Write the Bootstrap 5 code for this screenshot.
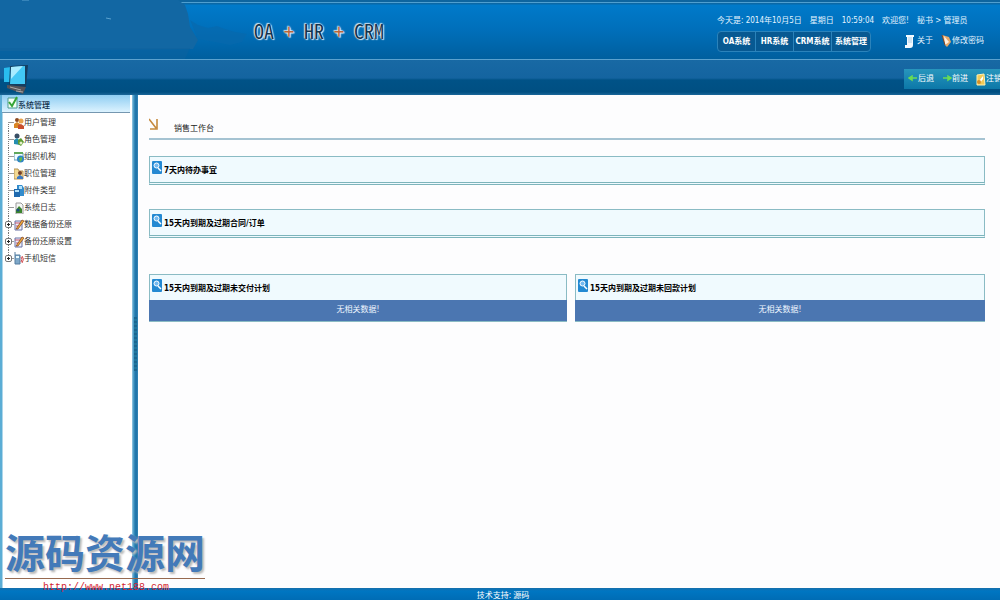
<!DOCTYPE html>
<html lang="zh-CN">
<head>
<meta charset="utf-8">
<meta name="viewport" content="width=device-width, initial-scale=1">
<title>OA + HR + CRM</title>
<link href="https://cdn.jsdelivr.net/npm/bootstrap@5.3.0/dist/css/bootstrap.min.css" rel="stylesheet">
<style>
body{font-family:"DejaVu Sans Condensed","Noto Sans CJK SC",sans-serif;font-size:8px;line-height:12px;color:#222;background:#fdfdfe}
a{color:inherit;text-decoration:none}
svg{flex:none;display:block}
.page-top{height:60px;background:linear-gradient(#0e659f 0 2px,#4f9fd0 2px 3px,#0a68a6 3px 4px,#007aca 5px,#006fba 30px,#005f9e);border-bottom:1px solid #5ba2cf}
.top-art{left:0;top:0;width:260px;height:59px}
.brand-text{font-family:"Noto Sans Mono CJK SC","Liberation Mono",monospace;font-size:20px;line-height:24px;margin:19px 0 0 254px;color:#12354f;white-space:pre;text-shadow:0 0 1px #fff,0 0 2px #dcebf5,1px 1px 1px #d5e8f4,-1px -1px 1px #b9d8ec}
.brand-text span{color:#b9653a}
.top-info{width:283px;padding-top:15px;color:#e4f4ff;white-space:nowrap}
.top-links{padding-top:3px}
.sys-tabs{border:1px solid #2b83bb;border-radius:4px;background:#075992;height:21px}
.sys-tabs button{width:38px;border:0;border-right:1px solid #2b83bb;background:none;color:#fff;font-weight:700;padding:0;font-size:8px;line-height:20px}
.sys-tabs button:last-child{border:0}
.tool-strip{height:35px;background:linear-gradient(#1869a4,#1464a0 18px,#005287 20px,#004f82 32px,#1b6799);overflow:hidden}
.tool-links{width:96px;height:20px;margin-top:3px;background:linear-gradient(#2896bd,#0c78a8);color:#fff;white-space:nowrap;overflow:hidden}
.side{width:132px;background:linear-gradient(90deg,#5badd5 0 2px,#fff 3px)}
.split-bar{width:6px;background:linear-gradient(90deg,#9accE6,#3a8fbd 2px,#1a6fa6 4px,#3486b5)}
.side-head{height:18px;margin:0 2px;padding-left:5px;background:linear-gradient(#8fcdf2,#dcf3ff);border-bottom:1px solid #7597b0;font-weight:500;color:#102f4b}
.side-head span{padding-top:5px}
.grip{left:2px;top:222px;width:3px;height:54px;background:repeating-linear-gradient(#1a6590 0 2px,#1f779f 2px 4px)}
.tree{margin:1px 0 0 8px;padding:0;list-style:none}
.tree li{height:17px;position:relative;color:#333}
.tree li::before{content:"";position:absolute;left:0;top:0;height:17px;border-left:1px dotted #777}
.tree li:first-child::before{top:8px;height:9px}
.tree li:last-child::before{height:9px}
.tree li::after{content:"";position:absolute;left:0;top:8px;width:6px;border-top:1px solid #999}
.tree a{padding-left:6px;height:17px}
.fold i{position:absolute;left:-3px;top:5px;width:7px;height:7px;border:1px solid #777;border-radius:2px;background:linear-gradient(#222,#222) center/3px 1px no-repeat,linear-gradient(#222,#222) center/1px 3px no-repeat,#fff;z-index:1}
.work{padding:22px 15px 16px 11px}
.work-title{height:23px;border-bottom:2px solid #a5c3d2}
.work-title span{padding-top:6px}
.panel{border:1px solid #8abbc4;background:#f0fafe;color:#000}
.panel h2{font-size:8px;line-height:28px;height:25px;margin:0;padding-left:2px;font-weight:700;gap:2px}
.panel-bar{border-bottom:3px double #7db4bb}
.plans{display:grid;grid-template-columns:418fr 410fr;margin-top:36px}
.none{height:21px;line-height:20px;background:#4b76b1;color:#f0f6ff;text-align:center;margin:0 -1px}
.page-foot{height:12px;background:linear-gradient(#176fab,#0076c2 3px,#006cb4);color:#fff;text-align:center;line-height:15px;overflow:hidden;padding-left:6px}
.stamp{left:5px;bottom:4px;width:200px;color:#437ab9;font-size:40px;line-height:48px;font-weight:700;white-space:nowrap;z-index:3}
.stamp div{border-bottom:1px solid #96694f;text-shadow:2px 2px 2px #bbb}
.stamp a{display:block;font:10px/17px "Liberation Mono",monospace;color:#d21f32;padding-left:38px}
</style>
</head>
<body>
<svg width="0" height="0" class="position-absolute" aria-hidden="true">
<symbol id="find" viewBox="0 0 10 13"><rect width="10" height="13" rx="1" fill="#2389d2"/><circle cx="4.5" cy="4.5" r="2.5" fill="#73baf0" stroke="#fff"/><path d="M6 7l3 3" stroke="#fff" stroke-width="1.5"/></symbol>
<symbol id="note" viewBox="0 0 10 12"><path d="M1 2h7v9H1z" fill="#eef0fb" stroke="#6873a5"/><path d="M1 4h6M2 7h4" stroke="#c5506a"/><path d="M2 10L8 1l2 1-6 8z" fill="#f1ad3b" stroke="#7a3b20" stroke-width=".7"/></symbol>
</svg>
<div class="min-vh-100 d-flex flex-column position-relative overflow-hidden">
<header class="page-top d-flex justify-content-between position-relative">
<svg class="top-art position-absolute" viewBox="0 0 260 59" aria-hidden="true"><path d="M0 0H178L185 5 188 14 190 27 198 40 193 49 0 51z" fill="#1267a3"/><path d="M0 48H190L185 59H0z" fill="#0d629e" opacity=".5"/><path d="M190 20l8 5 10 3 9-2 8 3 10 3 12 2-5 8-12 3-15-3-17-3z" fill="#0869ac" opacity=".65"/><path d="M22 0h7M106 18l5 1" stroke="#5ba2cf"/></svg>
<div class="brand-text position-relative">OA <span>+</span> HR <span>+</span> CRM</div>
<div class="top-info">
<div class="d-flex gap-2"><span>今天是: 2014年10月5日</span><span>星期日</span><span>10:59:04</span><span>欢迎您!</span><span>秘书 &gt; 管理员</span></div>
<div class="d-flex">
<nav class="sys-tabs d-flex mt-1" aria-label="系统"><button type="button">OA系统</button><button type="button">HR系统</button><button type="button">CRM系统</button><button type="button">系统管理</button></nav>
<a href="#" class="top-links d-flex align-items-center ms-auto"><svg width="11" height="14" viewBox="0 0 11 14"><path d="M2 1h8v2H9v8c0 2-1 3-3 3H1v-3h2V3H2z" fill="#f3faff"/><path d="M4 4h4M4 6h4M4 8h4" stroke="#afd0e8"/></svg>&nbsp;关于</a>
<a href="#" class="top-links d-flex align-items-center ms-2 me-3"><svg width="11" height="14" viewBox="0 0 11 14"><path d="M1 1l7 2 2 5-4 5-2-2z" fill="#e8a868"/><path d="M3 2l5 6-4 3z" fill="#fff0df"/><path d="M1 1l3 10" stroke="#76452c"/></svg>修改密码</a>
</div></div>
</header>
<div class="tool-strip d-flex justify-content-between">
<svg class="ms-1 mt-1" width="25" height="31" viewBox="0 0 25 31" aria-hidden="true"><path d="M0 4l7-1v15H0z" fill="#29bdef"/><path d="M6 2l18-1-2 22H5z" fill="#153e60"/><path d="M7 3l14-1v18H6z" fill="#42c8f5"/><path d="M7 3l12-1L7 15z" fill="#a8ecff"/><path d="M3 21l19 2-3 7-16-6z" fill="#56545a"/><path d="M6 23l11 3M12 27l7 1" stroke="#aaa"/></svg>
<nav class="tool-links d-flex align-items-center align-self-center ps-1" aria-label="导航">
<a href="#" class="d-flex align-items-center me-2"><svg width="10" height="8" viewBox="0 0 10 8"><path d="M4 1L1 3l3 2zM1 3h8" fill="#68dc55" stroke="#68dc55" stroke-width="1.5"/></svg>后退</a>
<a href="#" class="d-flex align-items-center me-2"><svg width="10" height="8" viewBox="0 0 10 8"><path d="M6 1l3 2-3 2zM1 3h8" fill="#68dc55" stroke="#68dc55" stroke-width="1.5"/></svg>前进</a>
<a href="#" class="d-flex align-items-center"><svg width="10" height="13" viewBox="0 0 10 13"><path d="M1 2l7-1 1 11H1z" fill="#f2ca58" stroke="#fff0b0"/><path d="M3 8l4-5v3l-3 4z" fill="#fff"/><circle cx="3" cy="9" r="2" fill="#d58f28"/></svg>注销</a>
</nav></div>
<div class="d-flex flex-grow-1">
<aside class="side flex-shrink-0">
<div class="side-head d-flex align-items-start"><svg width="11" height="15" viewBox="0 0 11 15"><path d="M1 3h9v10H1z" fill="#f2fff4" stroke="#4b9a90"/><path d="M2 7l3 4 5-9" fill="none" stroke="#35a536" stroke-width="2"/></svg><span>系统管理</span></div>
<ul class="tree">
<li><a href="#" class="d-flex align-items-center"><svg width="10" height="12" viewBox="0 0 10 12"><circle cx="3" cy="3" r="2" fill="#8c4a23"/><path d="M0 11V7l3-2 3 2v4z" fill="#d98624"/><circle cx="7" cy="4" r="2.5" fill="#e7a34d"/><path d="M4 12V8l3-1 3 2v3z" fill="#c94f2d"/></svg>用户管理</a></li>
<li><a href="#" class="d-flex align-items-center"><svg width="10" height="13" viewBox="0 0 10 13"><circle cx="3" cy="3" r="2.5" fill="#3a4f65"/><path d="M0 11V7l3-2 3 3v4z" fill="#258db0"/><path d="M4 7l3-2 3 4-3 4-3-2z" fill="#5d9b32"/><circle cx="7" cy="10" r="1.5" fill="#e4efc9"/></svg>角色管理</a></li>
<li><a href="#" class="d-flex align-items-center"><svg width="10" height="12" viewBox="0 0 10 12"><path d="M0 2h9v7H0z" fill="#f3fbff" stroke="#5b97b4"/><path d="M0 2h9" stroke="#61a85c" stroke-width="2"/><circle cx="6.5" cy="8" r="3.5" fill="#2c84c5"/><path d="M5 7l3-1v3l-2 2z" fill="#67b84a"/></svg>组织机构</a></li>
<li><a href="#" class="d-flex align-items-center"><svg width="10" height="12" viewBox="0 0 10 12"><path d="M0 1h4l1 2h4v8H0z" fill="#f3d993" stroke="#b69350"/><circle cx="6" cy="5" r="2" fill="#774128"/><path d="M3 11V9l3-2 3 2v2z" fill="#3c79c2"/></svg>职位管理</a></li>
<li><a href="#" class="d-flex align-items-center"><svg width="10" height="13" viewBox="0 0 10 13"><path d="M3 1h5l2 3v8H3z" fill="#338ccc"/><path d="M0 5h6v8H0z" fill="#1e69ae"/><path d="M1 6h4v2H1zM5 2h3v3H5z" fill="#b5e2fb"/></svg>附件类型</a></li>
<li><a href="#" class="d-flex align-items-center"><svg width="10" height="12" viewBox="0 0 10 12"><path d="M2 1h5l2 2v9H2z" fill="#f5f7f5" stroke="#999"/><path d="M2 11V8l3-4 3 3v4z" fill="#3c852e"/><circle cx="4" cy="8" r="1.5" fill="#1e4d80"/></svg>系统日志</a></li>
<li class="fold"><i></i><a href="#" class="d-flex align-items-center"><svg width="10" height="12"><use href="#note"/></svg>数据备份还原</a></li>
<li class="fold"><i></i><a href="#" class="d-flex align-items-center"><svg width="10" height="12"><use href="#note"/></svg>备份还原设置</a></li>
<li class="fold"><i></i><a href="#" class="d-flex align-items-center"><svg width="10" height="13" viewBox="0 0 10 13"><path d="M1 0v3M1 3h5v9H1z" fill="#7ea8c9" stroke="#557d9f"/><path d="M2 5h3" stroke="#e9faff" stroke-width="2"/><path d="M7 5q2 2 0 5M8 4q3 3 0 7" fill="none" stroke="#d14c50"/></svg>手机短信</a></li>
</ul>
</aside>
<div class="split-bar flex-shrink-0 position-relative"><div class="grip position-absolute"></div></div>
<main class="work flex-grow-1">
<div class="work-title d-flex gap-3"><svg width="9" height="14" viewBox="0 0 9 14"><path d="M0 2l7 9M8 2v10H1" fill="none" stroke="#c58a3e" stroke-width="1.6"/></svg><span>销售工作台</span></div>
<section class="panel panel-bar mt-3"><h2 class="d-flex"><svg width="10" height="13" class="mt-1"><use href="#find"/></svg>7天内待办事宜</h2></section>
<section class="panel panel-bar mt-4"><h2 class="d-flex"><svg width="10" height="13" class="mt-1"><use href="#find"/></svg>15天内到期及过期合同/订单</h2></section>
<div class="plans gap-2">
<section class="panel"><h2 class="d-flex"><svg width="10" height="13" class="mt-1"><use href="#find"/></svg>15天内到期及过期未交付计划</h2><div class="none">无相关数据!</div></section>
<section class="panel"><h2 class="d-flex"><svg width="10" height="13" class="mt-1"><use href="#find"/></svg>15天内到期及过期未回款计划</h2><div class="none">无相关数据!</div></section>
</div>
</main></div>
<footer class="page-foot">技术支持: 源码</footer>
<div class="stamp position-absolute"><div>源码资源网</div><a href="#">http://www.net188.com</a></div>
</div>
<script src="https://cdn.jsdelivr.net/npm/bootstrap@5.3.0/dist/js/bootstrap.bundle.min.js"></script>
</body>
</html>
